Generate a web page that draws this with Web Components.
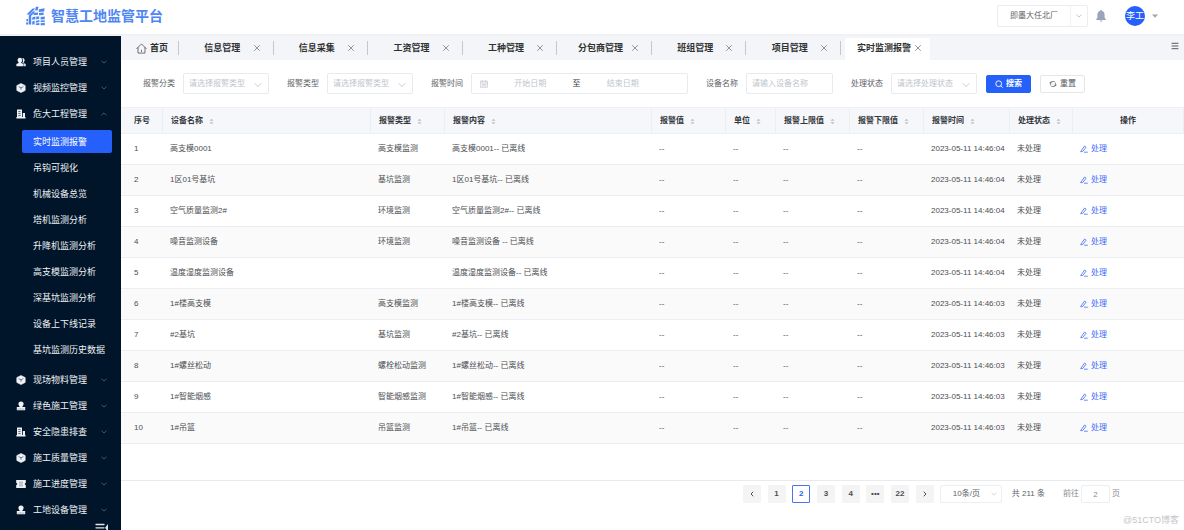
<!DOCTYPE html>
<html lang="zh-CN">
<head>
<meta charset="utf-8">
<title>智慧工地监管平台</title>
<style>
  html, body { height: 100%; margin: 0; }
  body { font: 8px/12px "Liberation Sans", "Noto Sans CJK SC", sans-serif; color: #4c4e52; background: #fff; }
</style>
</head>
<body>
<site-app></site-app>
<script>
const RESET = `*{box-sizing:border-box} button,input,select{font:inherit;color:inherit;margin:0;padding:0;border:0;background:none;outline:0;border-radius:0} a{color:inherit;text-decoration:none} select{appearance:none;cursor:pointer} button{cursor:pointer}`;

function define(name, css, render) {
  customElements.define(name, class extends HTMLElement {
    connectedCallback() {
      if (this.shadowRoot) return;
      const root = this.attachShadow({ mode: 'open' });
      root.innerHTML = `<style>${RESET}${css}</style>` + render(this);
    }
  });
}

const line = (d, w = 1.2) => `<path d="${d}" fill="none" stroke="currentColor" stroke-width="${w}" stroke-linecap="round" stroke-linejoin="round"/>`;
const fill = d => `<path d="${d}" fill="currentColor"/>`;
const ICONS = {
  down: ['0 0 8 8', line('M1 2.5 4 5.5 7 2.5', .9)],
  up: ['0 0 8 8', line('M1 5.5 4 2.5 7 5.5', .9)],
  left: ['0 0 8 8', line('M5 2 3 4 5 6', 1)],
  right: ['0 0 8 8', line('M3 2 5 4 3 6', 1)],
  close: ['0 0 8 8', line('M1.5 1.5 6.5 6.5M6.5 1.5 1.5 6.5', .9)],
  caret: ['0 0 8 8', fill('M1 2.5H7L4 5.8Z')],
  sort: ['0 0 6 8', fill('M3 .7 5.4 3.2H.6ZM3 7.3 .6 4.8H5.4Z')],
  menu: ['0 0 8 8', line('M1 1.3H7M1 4H7M1 6.7H7', 1)],
  search: ['0 0 8 8', `<circle cx="3.7" cy="3.7" r="2.9" fill="none" stroke="currentColor" stroke-width=".9"/>` + line('M5.8 5.8 7.4 7.4', .9)],
  reset: ['0 0 8 8', line('M1.6 5V2.6A1 1 0 0 1 2.6 1.6H5.4M6.4 3V5.4A1 1 0 0 1 5.4 6.4H2.6M.7 3 1.6 2 2.5 3M5.5 5 6.4 6 7.3 5', .7)],
  edit: ['0 0 8 8', line('M1.3 5.6 4.6 1 6.1 2.2 2.8 6.4 1.1 6.7ZM4.4 7.2H7.4', .8)],
  calendar: ['0 0 8 8', line('M.6 1.2H7.4V7.3H.6ZM.6 3H7.4M2.3 .5V1.8M5.7 .5V1.8M2 4.6H6M2 5.9H6', .6)],
  home: ['0 0 12 12', line('M.8 6.2 6 1 11.2 6.2M2.2 5V11H9.8V5', .9) + line('M6 7.8V9.3', .9)],
  bell: ['0 0 10 12', fill('M5 0C5.7 0 6 .5 6 1.1 7.8 1.6 8.6 3 8.6 4.8V7.6L9.8 9.2V9.9H.2V9.2L1.4 7.6V4.8C1.4 3 2.2 1.6 4 1.1 4 .5 4.3 0 5 0ZM3.6 10.6H6.4C6.3 11.4 5.8 11.8 5 11.8 4.2 11.8 3.7 11.4 3.6 10.6Z')],
  people: ['0 0 10 10', fill('M3.9 .8C5.4 .8 6.2 1.8 6.2 3.2 6.2 4.2 5.8 5 5.2 5.5V6L7.6 7V9.2H.4V7L2.7 6V5.5C2.1 5 1.6 4.2 1.6 3.2 1.6 1.8 2.4 .8 3.9 .8ZM6 .9C7.8 .7 8.6 1.8 8.6 3.2 8.6 4.2 8.2 5 7.6 5.5V5.9L9.7 6.9V9.2H8.1V6.7L6.3 5.8C6.8 5 7 4.2 7 3.2 7 2.3 6.6 1.5 6 .9Z')],
  cube: ['0 0 10 10', `<path d="M5 .5 9.2 2.6V7.4L5 9.6 .8 7.4V2.6Z" fill="currentColor" stroke="currentColor" stroke-width=".6" stroke-linejoin="round"/><path d="M2.6 3.6 5 4.8 7.4 3.6M5 4.8V6.8" stroke="#53606f" stroke-width=".8" fill="none"/>`],
  building: ['0 0 10 10', fill('M1 .6H6V8H9.5V9.5H.4V8H1ZM6.8 4H9V8H6.8Z') + `<path d="M2.3 2.6H4.6M2.3 4.6H4.6M2.3 6.6H4.6" stroke="#44515f" stroke-width=".9"/>`],
  stamp: ['0 0 10 10', fill('M5 .5C6.8 .5 7.6 1.6 7.6 3 7.6 4 7 4.8 6.4 5.4V6H9.2V9.3H.8V6H3.6V5.4C3 4.8 2.4 4 2.4 3 2.4 1.6 3.2 .5 5 .5Z') + `<path d="M1.6 8H8.4" stroke="#6d7885" stroke-width=".5"/>`],
  ticket: ['0 0 10 10', fill('M.2 1H9.8V4A1 1 0 0 0 9.8 6V9H.2V6A1 1 0 0 0 .2 4Z') + `<path d="M3 3.2H7M3 5H7M3 6.8H7" stroke="#8b95a0" stroke-width=".8"/>`],
  fold: ['0 0 14 12', line('M1 1.5H9M1 4.8H9M1 8.1H9', 1.3) + fill('M13 1V8.6L10 4.8Z')],
  logo: ['0 0 20 20', fill('M.4 8.4 6.6 2.6H9.4L3.4 8.4ZM2.8 9.2 8.4 4.6V7L5.2 9.8V18.4H2.6ZM9.8 .8H12.6L11.6 4.6H9.2ZM13 3.2 18.6 2.2 18.2 5.4 12.6 6ZM8.4 6.8 12 6.4V8.8L7.4 9.2ZM13 7 17.6 6.6V9L13 9.2ZM.4 13H2V15.2H.4ZM6.2 11.4 9.4 10.6V13.2L6.2 13.8ZM10.2 10.6H13.2V12.8L10.2 13.4ZM14.6 11 18.8 10.4V13.2L14.6 13.6ZM6.2 15.4 8.6 14.6V18.4H6.2ZM9.8 15 13.4 14V16L9.8 16.8ZM14.6 14.6 18.8 14.2V15.8L14.6 16.2ZM9.8 17.6 13.4 17V19H9.8ZM14.6 17.2 18.8 16.8V19.2H14.6ZM0 16.8 2 16.2V18.4H0Z')]
};
define('ui-icon', ':host{display:block;flex:none;width:8px;height:8px} svg{display:block;width:100%;height:100%}', el => {
  const [box, body] = ICONS[el.getAttribute('name')];
  return `<svg viewBox="${box}" aria-hidden="true">${body}</svg>`;
});

define('app-header', `
  :host{display:flex;align-items:center;height:36px;padding:0 25px 2px 26px;background:#fff;border-bottom:2px solid #eff1f4}
  .brand{display:flex;align-items:center;gap:5px;color:#4f86f4;flex:1}
  .brand ui-icon{width:20px;height:20px}
  h1{margin:0;font-size:14px;line-height:20px;font-weight:700}
  .site{position:relative;display:flex;align-items:center;width:91px;height:22px;border:1px solid #ebedf0;border-radius:2px}
  .site select{width:100%;height:20px;padding-left:12px;color:#606266}
  .site span{position:absolute;right:0;width:17px;height:20px;display:grid;place-items:center;border-left:1px solid #f2f3f5;color:#a8abb2;pointer-events:none}
  .site ui-icon{width:6px;height:6px}
  .bell{margin:0 19px 0 8px;color:#9aa5bd}
  .bell ui-icon{width:10px;height:12px}
  .user{display:flex;align-items:center;gap:6px;color:#a0a4ab}
  .user b{display:grid;place-items:center;width:20px;height:20px;border-radius:50%;background:#2660fb;color:#fff;font-weight:400;font-size:9px}
`, () => `
  <div class="brand"><ui-icon name="logo"></ui-icon><h1>智慧工地监管平台</h1></div>
  <div class="site"><select aria-label="项目"><option>即墨大任北厂</option></select><span><ui-icon name="down"></ui-icon></span></div>
  <button class="bell" aria-label="通知"><ui-icon name="bell"></ui-icon></button>
  <button class="user"><b>李工</b><ui-icon name="caret"></ui-icon></button>`);

define('menu-entry', `
  :host{display:block}
  a{display:flex;align-items:center;height:26px;padding:0 14px 0 16px;color:#eef1f5;font-size:9px;gap:7px;white-space:nowrap}
  .kind{width:10px;height:10px}
  .text{flex:1}
  .arrow{width:6px;height:6px;color:#6b7886}
  :host([sub]) a{padding:0 11px;margin:0 9px 0 22px}
  :host([active]) a{height:23px;margin-top:1px;margin-bottom:2px;background:#2660fb;border-radius:2px;color:#fff}
`, el => `<a href="#">${el.hasAttribute('icon') ? `<ui-icon class="kind" name="${el.getAttribute('icon')}"></ui-icon>` : ''}<span class="text"><slot></slot></span>${el.hasAttribute('icon') ? `<ui-icon class="arrow" name="${el.hasAttribute('open') ? 'up' : 'down'}"></ui-icon>` : ''}</a>`);

define('side-menu', `
  :host{display:block;background:#001529;padding-top:13px;overflow:hidden}
  .sub{padding:2px 0 4px}
  .fold{display:block;margin:0 12px 0 auto;color:#dfe4ea}
  .fold ui-icon{width:14px;height:12px}
`, () => {
  const top = (icon, text, extra = '') => `<menu-entry icon="${icon}" ${extra}>${text}</menu-entry>`;
  const subs = ['实时监测报警', '吊钩可视化', '机械设备总览', '塔机监测分析', '升降机监测分析', '高支模监测分析', '深基坑监测分析', '设备上下线记录', '基坑监测历史数据'];
  return `<nav>${top('people', '项目人员管理')}${top('cube', '视频监控管理')}${top('building', '危大工程管理', 'open')}
    <div class="sub">${subs.map((s, i) => `<menu-entry sub ${i ? '' : 'active'}>${s}</menu-entry>`).join('')}</div>
    ${top('cube', '现场物料管理')}${top('stamp', '绿色施工管理')}${top('building', '安全隐患排查')}${top('cube', '施工质量管理')}${top('ticket', '施工进度管理')}${top('stamp', '工地设备管理')}</nav>
    <button class="fold" aria-label="收起菜单"><ui-icon name="fold"></ui-icon></button>`;
});

define('page-tab', `
  :host{display:flex;align-items:center;padding:0 12px 0 13px;font-size:9px;font-weight:700;color:#303133;white-space:nowrap;border-right:1px solid;border-image:linear-gradient(transparent 22%,#c4c7cc 22% 78%,transparent 78%) 1}
  a{flex:1;text-align:center}
  button{color:#85898f}
  :host([active]){background:#fff;border:0;padding:0 8px 2px 12px;margin:2px 0 0 4px;gap:3px;border-radius:3px 3px 0 0}
`, () => `<a href="#"><slot></slot></a><button aria-label="关闭"><ui-icon name="close"></ui-icon></button>`);

define('tab-bar', `
  :host{display:flex;height:24px;background:#f4f5f8;color:#303133}
  .home{display:flex;align-items:center;gap:3px;padding:0 10px 0 15px;font-size:9px;font-weight:700;border-right:1px solid;border-image:linear-gradient(transparent 22%,#c4c7cc 22% 78%,transparent 78%) 1}
  .home ui-icon{width:11px;height:11px;color:#55585d}
  .tabs{display:grid;grid-template-columns:repeat(7,1fr);width:662px}
  .more{margin:6px 5px auto auto;color:#55585d}
`, () => `<a class="home" href="#"><ui-icon name="home"></ui-icon>首页</a>
  <div class="tabs">${['信息管理', '信息采集', '工资管理', '工种管理', '分包商管理', '班组管理', '项目管理'].map(t => `<page-tab>${t}</page-tab>`).join('')}</div>
  <page-tab active>实时监测报警</page-tab>
  <button class="more" aria-label="更多"><ui-icon name="menu"></ui-icon></button>`);

define('form-field', `
  :host{display:flex;align-items:center;gap:8px;color:#606266}
  label{white-space:nowrap}
  .box{display:flex;align-items:center;width:86px;height:21px;border:1px solid #e8eaed;border-radius:2px;color:#c0c4cc;background:#fff}
  .box.text{width:87px}
  .box.range{width:217px;padding:0 24px 0 8px;gap:2px;color:#b6bac2}
  select,input{flex:1;min-width:0;width:0;height:19px;padding-left:5px}
  .range input{padding:0;text-align:center}
  .range span{color:#303133}
  .box>ui-icon[name=down]{margin:2px 6px 0 -14px;pointer-events:none}
  ::placeholder{color:#c0c4cc;opacity:1}
`, el => {
  const kind = el.getAttribute('kind'), hint = el.getAttribute('hint');
  const body = {
    select: `<select id="f"><option>${hint}</option></select><ui-icon name="down"></ui-icon>`,
    text: `<input id="f" placeholder="${hint}">`,
    range: `<ui-icon name="calendar"></ui-icon><input id="f" placeholder="开始日期"><span>至</span><input aria-label="结束日期" placeholder="结束日期">`
  }[kind];
  return `<label for="f"><slot></slot></label><div class="box ${kind}">${body}</div>`;
});

define('action-button', `
  :host{display:block}
  button{display:flex;align-items:center;justify-content:center;gap:3px;width:45px;height:18px;border:1px solid #e4e6ea;border-radius:2px;color:#55585d;background:#fff}
  :host([primary]) button{background:#2660fb;border-color:#2660fb;color:#fff;font-weight:700}
`, el => `<button><ui-icon name="${el.getAttribute('icon')}"></ui-icon><span><slot></slot></span></button>`);

define('filter-bar', `
  :host{display:flex;align-items:center;height:47px;padding:0 22px;gap:18px;background:#fff}
  .actions{display:flex;gap:9px;margin-left:-9px}
`, () => `
  <form-field kind="select" hint="请选择报警类型">报警分类</form-field>
  <form-field kind="select" hint="请选择报警类型">报警类型</form-field>
  <form-field kind="range">报警时间</form-field>
  <form-field kind="text" hint="请输入设备名称">设备名称</form-field>
  <form-field kind="select" hint="请选择处理状态">处理状态</form-field>
  <div class="actions"><action-button primary icon="search">搜索</action-button><action-button icon="reset">重置</action-button></div>`);

const COLS = [['序号', 42], ['设备名称', 208], ['报警类型', 74], ['报警内容', 207], ['报警值', 74], ['单位', 50], ['报警上限值', 74], ['报警下限值', 74], ['报警时间', 86], ['处理状态', 63], ['操作', 111]];
const ROWS = [
  ['高支模0001', '高支模监测', '高支模0001-- 已离线', '04'],
  ['1区01号基坑', '基坑监测', '1区01号基坑-- 已离线', '04'],
  ['空气质量监测2#', '环境监测', '空气质量监测2#-- 已离线', '04'],
  ['噪音监测设备', '环境监测', '噪音监测设备 -- 已离线', '04'],
  ['温度湿度监测设备', '', '温度湿度监测设备-- 已离线', '04'],
  ['1#楼高支模', '高支模监测', '1#楼高支模-- 已离线', '03'],
  ['#2基坑', '基坑监测', '#2基坑-- 已离线', '03'],
  ['1#螺丝松动', '螺栓松动监测', '1#螺丝松动-- 已离线', '03'],
  ['1#智能烟感', '智能烟感监测', '1#智能烟感-- 已离线', '03'],
  ['1#吊篮', '吊篮监测', '1#吊篮-- 已离线', '03']
];
define('alarm-table', `
  :host{display:block}
  table{width:100%;table-layout:fixed;border-collapse:separate;border-spacing:0;white-space:nowrap}
  th{height:27px;padding:0 0 0 8px;text-align:left;font-weight:700;color:#33363b;background:#f5f7fa;border:solid #eceff3;border-width:1px 1px 1px 0}
  th:first-child,td:first-child{padding-left:13px}
  th:last-child{text-align:center;padding:0}
  th div{display:flex;align-items:center;gap:6px}
  th ui-icon{width:5px;height:7px;margin-top:2px;color:#b9bdc5}
  td{height:31px;padding:0 0 0 7px;border-bottom:1px solid #eceef1}
  tbody tr:nth-child(even){background:#fafafa}
  td a{display:flex;align-items:center;gap:3px;color:#3d6bfa}
`, () => {
  const cols = COLS.map(c => `<col style="width:${c[1]}px">`).join('');
  const head = COLS.map(([t], i) => `<th>${i && i < 10 ? `<div>${t}<ui-icon name="sort"></ui-icon></div>` : t}</th>`).join('');
  const rows = ROWS.map((r, i) => `<tr>${[i + 1, r[0], r[1], r[2], '--', '--', '--', '--', '2023-05-11 14:46:' + r[3], '未处理', '<a href="#"><ui-icon name="edit"></ui-icon>处理</a>'].map(c => `<td>${c}</td>`).join('')}</tr>`).join('');
  return `<table><colgroup>${cols}</colgroup><thead><tr>${head}</tr></thead><tbody>${rows}</tbody></table>`;
});

define('page-nav', `
  :host{display:flex;justify-content:flex-end;align-items:center;padding:4px 64px 0 0;color:#606266;border-top:1px solid #e8eaed}
  .pages{display:flex;justify-content:space-between;width:191px}
  .pages button{display:grid;place-items:center;width:18px;height:18px;background:#f4f4f5;border-radius:1px;font-weight:700;color:#4c4e52}
  .pages .on{background:#fff;border:1px solid #4a74ee;color:#2660fb}
  .size{position:relative;display:flex;align-items:center;width:62px;height:18px;margin:0 10px 0 6px;border:1px solid #eceef0;border-radius:2px}
  .size select{width:100%;height:16px;padding-left:12px}
  .size ui-icon{position:absolute;right:4px;width:6px;height:6px;color:#c0c4cc;pointer-events:none}
  .total{margin-right:18px}
  label{display:flex;align-items:center;gap:2px;color:#8a8d93}
  input{width:29px;height:18px;border:1px solid #eceef0;border-radius:2px;text-align:center}
`, () => `<div class="pages"><button aria-label="上一页"><ui-icon name="left"></ui-icon></button><button>1</button><button class="on">2</button><button>3</button><button>4</button><button>•••</button><button>22</button><button aria-label="下一页"><ui-icon name="right"></ui-icon></button></div>
  <div class="size"><select aria-label="每页条数"><option>10条/页</option></select><ui-icon name="down"></ui-icon></div>
  <span class="total">共 211 条</span>
  <label>前往<input value="2">页</label>`);

define('site-app', `
  :host{display:flex;flex-direction:column;height:100vh;overflow:hidden}
  .body{flex:1;min-height:0;display:grid;grid-template-columns:121px minmax(0,1fr)}
  main{display:flex;flex-direction:column;min-height:0}
  alarm-table{flex:1;min-height:0}
  footer{padding:0 5px 4px;text-align:right;font-size:9px;color:#c3c5c9;margin-top:11px}
`, () => `<app-header></app-header><div class="body"><side-menu></side-menu>
  <main><tab-bar></tab-bar><filter-bar></filter-bar><alarm-table></alarm-table><page-nav></page-nav><footer>@51CTO博客</footer></main></div>`);
</script>
</body>
</html>
